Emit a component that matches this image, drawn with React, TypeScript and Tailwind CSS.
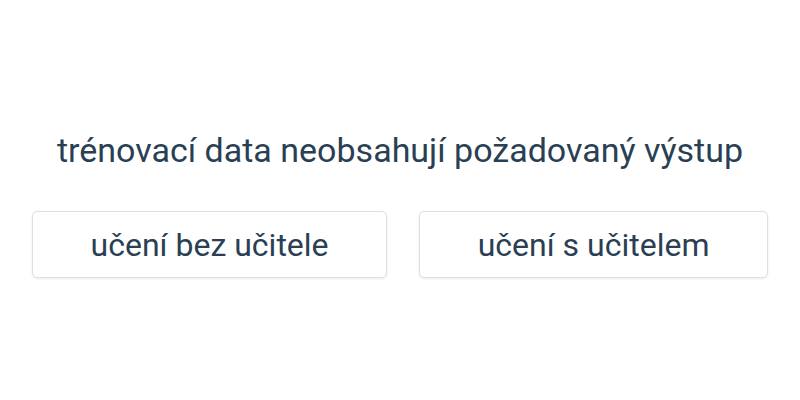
import React from 'react'

export default function App() {
  const options = ['učení bez učitele', 'učení s učitelem']
  return (
    <main className="w-[800px] h-[400px] bg-white text-[#2a3f54] font-['Roboto',sans-serif] flex flex-col pt-[130px]">
      <div className="text-center text-[34px] leading-[40px] mb-[41px]">trénovací data neobsahují požadovaný výstup</div>
      <div className="flex px-[16px]">
        {options.map((o) => (
          <button
            key={o}
            className="flex-auto mx-[16px] h-[67px] rounded-[5px] border border-[#e0e0e0] bg-white shadow-[0_1px_3px_rgba(0,0,0,0.08)] text-[32px] text-[#2a3f54]"
          >
            {o}
          </button>
        ))}
      </div>
    </main>
  )
}
